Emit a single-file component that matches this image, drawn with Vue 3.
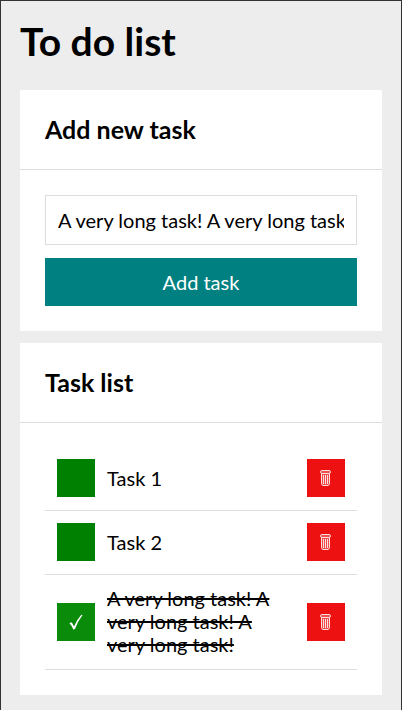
<script setup>
import { ref } from 'vue'

const newTask = ref('A very long task! A very long task! A very long task!')
const tasks = ref([
  { id: 1, content: 'Task 1', done: false },
  { id: 2, content: 'Task 2', done: false },
  { id: 3, content: 'A very long task! A very long task! A very long task!', done: true },
])

function addTask() {
  const content = newTask.value.trim()
  if (!content) return
  tasks.value.push({ id: Date.now(), content, done: false })
  newTask.value = ''
}

function removeTask(id) {
  tasks.value = tasks.value.filter((task) => task.id !== id)
}
</script>

<template>
  <main class="page">
    <h1 class="title">To do list</h1>

    <section class="section">
      <h2 class="section-header">Add new task</h2>
      <form class="section-body form" @submit.prevent="addTask">
        <input v-model="newTask" class="field" type="text" aria-label="New task" />
        <button class="add" type="submit">Add task</button>
      </form>
    </section>

    <section class="section">
      <h2 class="section-header">Task list</h2>
      <ul class="section-body list">
        <li v-for="task in tasks" :key="task.id" class="item">
          <button
            type="button"
            class="square toggle"
            :class="{ 'toggle-done': task.done }"
            :aria-pressed="task.done"
            :aria-label="'Toggle ' + task.content"
            @click="task.done = !task.done"
          >
            <svg v-if="task.done" class="check" viewBox="0 0 14 16" aria-hidden="true">
              <path d="M0.4 9.3 L2.5 8.3 Q4.2 10.2 5 12.6 Q8 5.5 12.3 0.8 L13.6 1.1 Q8.7 7.5 6 15 L4.3 15.5 Q3 11.8 0.4 9.3Z" fill="#fff" />
            </svg>
          </button>
          <span class="content" :class="{ 'content-done': task.done }">{{ task.content }}</span>
          <button
            type="button"
            class="square remove"
            :aria-label="'Remove ' + task.content"
            @click="removeTask(task.id)"
          >
            <svg class="bin" viewBox="0 0 12 16" aria-hidden="true">
              <rect x="1" y="1" width="9" height="14" rx="1" fill="#fff" fill-opacity="0.25" />
              <g fill="none" stroke="#ffdede">
                <rect x="0.5" y="0.5" width="10" height="3" rx="1.5" />
                <path d="M1.5 3.5 V13.5 Q1.5 15 3 15.500 H8 Q9.500 15 9.500 13.500 V3.500" />
                <path d="M3.500 5 V14 M5.500 5 V14 M7.500 5 V14" />
              </g>
            </svg>
          </button>
        </li>
      </ul>
    </section>
  </main>
</template>

<style>
body {
  margin: 0;
  background: #ededed;
}
</style>

<style scoped>
.page {
  box-sizing: border-box;
  min-height: 100vh;
  padding: 16px 19px 15px;
  border: 1px solid #333;
  border-bottom: 0;
  background: #ededed;
  color: #000;
  font-family: Lato, sans-serif;
  font-size: 20px;
  line-height: 23px;
}

.title {
  margin: 0 0 25px;
  font-size: 39px;
  font-weight: 700;
  line-height: 48px;
}

.section {
  background: #fff;
}

.section + .section {
  margin-top: 12px;
}

.section-header {
  margin: 0;
  padding: 25px;
  border-bottom: 1px solid #ddd;
  font-size: 25px;
  font-weight: 700;
  line-height: 29px;
}

.section-body {
  padding: 25px;
}

.form {
  display: grid;
  gap: 13px;
}

.field,
.add {
  box-sizing: border-box;
  width: 100%;
  margin: 0;
  padding: 12px;
  border-radius: 0;
  font: inherit;
}

.field {
  border: 1px solid #ddd;
  background: #fff;
  color: #000;
  line-height: 24px;
}

.add {
  border: 0;
  background: #008080;
  color: #fff;
  line-height: 24px;
  cursor: pointer;
}

.list {
  margin: 0;
  padding-top: 24px;
  list-style: none;
}

.item {
  display: grid;
  grid-template-columns: auto 1fr auto;
  align-items: center;
  gap: 12px;
  padding: 12px 12px 13px;
  border-bottom: 1px solid #ddd;
}

.content {
  padding-right: 12px;
}

.square {
  display: flex;
  align-items: center;
  justify-content: center;
  width: 38px;
  height: 38px;
  padding: 0;
  border: 0;
  cursor: pointer;
}

.toggle {
  background: #008000;
}

.toggle-done {
  background: #0a8c0a;
}

.remove {
  background: #ee1111;
}

.content-done {
  text-decoration: line-through;
  text-decoration-thickness: 2px;
}

.check {
  width: 14px;
  height: 16px;
}

.bin {
  width: 12px;
  height: 16px;
}
</style>
